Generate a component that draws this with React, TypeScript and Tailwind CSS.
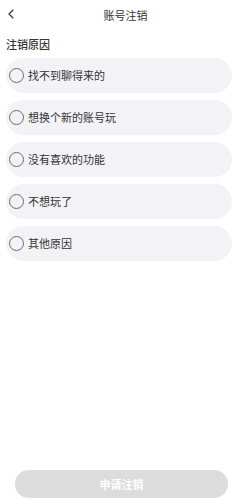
import { ChevronLeft } from "lucide-react";

const reasons = ["找不到聊得来的", "想换个新的账号玩", "没有喜欢的功能", "不想玩了", "其他原因"];

export default function App() {
  return (
    <div
      className="relative h-[500px] w-[251px] bg-white text-[#333]"
      style={{ fontFamily: '"Noto Sans CJK SC", "Noto Sans", sans-serif' }}
    >
      <div className="relative flex h-[30px] items-center justify-center">
        <ChevronLeft className="absolute left-[3px] top-[6px] h-[16px] w-[16px] text-[#333]" strokeWidth={1.75} />
        <span className="text-[11px] text-[#333]">账号注销</span>
      </div>
      <div className="px-[6px] pt-[7px] text-[11px] font-medium leading-[14px]">注销原因</div>
      <div className="mt-[7px] flex w-[232px] flex-col gap-[7px] pl-[6px]">
        {reasons.map((r) => (
          <div key={r} className="flex h-[35px] items-center gap-[4px] rounded-full bg-[#f3f3f7] pl-[3px]">
            <span className="h-[15px] w-[15px] rounded-full border-[1.5px] border-[#6b6b6b]" />
            <span className="text-[11px] text-[#333]">{r}</span>
          </div>
        ))}
      </div>
      <div className="absolute bottom-[2px] left-[15px] flex h-[28px] w-[213px] items-center justify-center rounded-full bg-[#dcdcdc] text-[11px] font-bold text-white">
        申请注销
      </div>
    </div>
  );
}
